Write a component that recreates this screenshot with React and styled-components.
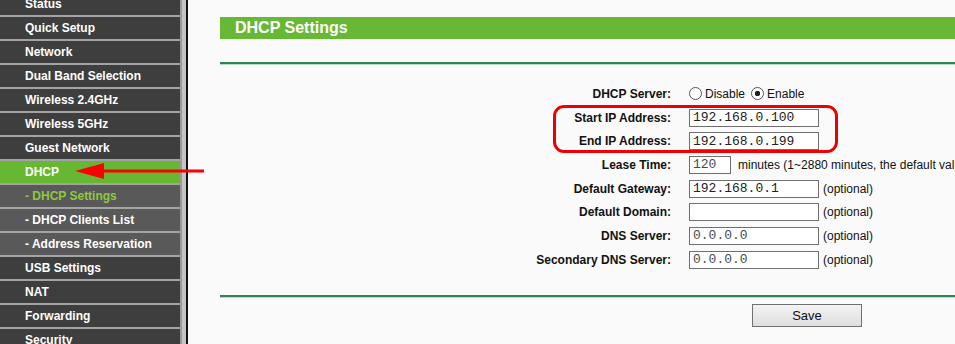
import styled, { createGlobalStyle } from 'styled-components';

const GlobalStyle = createGlobalStyle`
  html, body {
    margin: 0;
    padding: 0;
    overflow: hidden;
    background: #fafafa;
  }
  body {
    font-family: "Liberation Sans", Arial, sans-serif;
  }
`;

const menu = [
  { label: 'Status' },
  { label: 'Quick Setup' },
  { label: 'Network' },
  { label: 'Dual Band Selection' },
  { label: 'Wireless 2.4GHz' },
  { label: 'Wireless 5GHz' },
  { label: 'Guest Network' },
  { label: 'DHCP', active: true },
  { label: '- DHCP Settings', sub: true, current: true },
  { label: '- DHCP Clients List', sub: true },
  { label: '- Address Reservation', sub: true },
  { label: 'USB Settings' },
  { label: 'NAT' },
  { label: 'Forwarding' },
  { label: 'Security' },
];

const App = () => {
  return (
    <Page>
      <GlobalStyle />
      <Sidebar>
        {menu.map((item) => (
          <MenuItem
            key={item.label}
            $active={item.active}
            $sub={item.sub}
            $current={item.current}
          >
            {item.label}
          </MenuItem>
        ))}
      </Sidebar>
      <Divider />
      <Content>
        <TitleBar>DHCP Settings</TitleBar>
        <Rule />
        <Form>
          <Row>
            <Label>DHCP Server:</Label>
            <Value>
              <Radio />
              <span>Disable</span>
              <Radio $checked />
              <span>Enable</span>
            </Value>
          </Row>
          <Row>
            <Label>Start IP Address:</Label>
            <Value>
              <Field readOnly value="192.168.0.100" />
            </Value>
          </Row>
          <Row>
            <Label>End IP Address:</Label>
            <Value>
              <Field readOnly value="192.168.0.199" />
            </Value>
          </Row>
          <Row>
            <Label>Lease Time:</Label>
            <Value $gap={7}>
              <Field readOnly value="120" $width={42} $muted />
              <span>minutes (1~2880 minutes, the default value is 120)</span>
            </Value>
          </Row>
          <Row>
            <Label>Default Gateway:</Label>
            <Value>
              <Field readOnly value="192.168.0.1" />
              <span>(optional)</span>
            </Value>
          </Row>
          <Row>
            <Label>Default Domain:</Label>
            <Value>
              <Field readOnly value="" />
              <span>(optional)</span>
            </Value>
          </Row>
          <Row>
            <Label>DNS Server:</Label>
            <Value>
              <Field readOnly value="0.0.0.0" $muted />
              <span>(optional)</span>
            </Value>
          </Row>
          <Row>
            <Label>Secondary DNS Server:</Label>
            <Value>
              <Field readOnly value="0.0.0.0" $muted />
              <span>(optional)</span>
            </Value>
          </Row>
          <Highlight />
        </Form>
        <Rule $top={23} />
        <SaveButton>Save</SaveButton>
      </Content>
      <Arrow width="210" height="30" viewBox="0 0 210 30">
        <line x1="100" y1="15" x2="204" y2="15" stroke="#f00" strokeWidth="3" />
        <polygon points="75,15 104,7 104,23" fill="#f00" />
      </Arrow>
    </Page>
  );
};

const Page = styled.div`
  position: relative;
  display: flex;
  width: 955px;
  height: 344px;
  overflow: hidden;
  background: #fafafa;
`;

const Sidebar = styled.nav`
  flex: 0 0 180px;
  display: flex;
  flex-direction: column;
  margin-top: -7px;
`;

const MenuItem = styled.div`
  flex: 0 0 22px;
  line-height: 22px;
  padding-left: 25px;
  border-bottom: 2px solid #a3a3a3;
  font-size: 12px;
  font-weight: bold;
  white-space: nowrap;
  color: ${(p) => (p.$current ? '#8fc93f' : '#fff')};
  background: ${(p) => (p.$active ? '#66b833' : p.$sub ? '#595959' : '#3e3e3e')};
`;

const Divider = styled.div`
  flex: 0 0 6px;
  background: linear-gradient(to right, #9a9a9a 0 2px, #c4c4c4 2px);
  border-right: 2px solid #111;
`;

const Content = styled.main`
  flex: 1;
  min-width: 0;
  padding: 17px 0 0 32px;
  white-space: nowrap;
`;

const TitleBar = styled.h1`
  margin: 0;
  height: 22px;
  line-height: 22px;
  padding-left: 15px;
  background: #67b834;
  color: #fff;
  font-size: 16px;
  font-weight: bold;
`;

const Rule = styled.div`
  margin-top: ${(p) => p.$top ?? 23}px;
  height: 2px;
  background: #2c8552;
  box-shadow: 0 1px 0 #b8dcc5;
`;

const Form = styled.div`
  position: relative;
  margin-top: 18px;
  display: grid;
  grid-auto-rows: 23.7px;
`;

const Row = styled.div`
  display: grid;
  grid-template-columns: 451px auto;
  column-gap: 18px;
  align-items: center;
`;

const Label = styled.div`
  text-align: right;
  font-size: 12px;
  font-weight: bold;
  color: #111;
`;

const Value = styled.div`
  display: flex;
  align-items: center;
  gap: ${(p) => p.$gap ?? 4}px;
  font-size: 12px;
  color: #111;
`;

const Field = styled.input`
  box-sizing: border-box;
  width: ${(p) => p.$width ?? 130}px;
  height: 18px;
  margin: 0;
  padding: 0 0 0 3px;
  border: 1px solid #6f6f6f;
  background: #fff;
  font-family: "Liberation Mono", "Courier New", monospace;
  font-size: 13px;
  color: ${(p) => (p.$muted ? '#4a4a4a' : '#222')};
  outline: none;
`;

const Radio = styled.span`
  box-sizing: border-box;
  width: 13px;
  height: 13px;
  margin-right: -1px;
  border: 1px solid #555;
  border-radius: 50%;
  background: ${(p) =>
    p.$checked
      ? 'radial-gradient(circle, #222 0 2.5px, #fff 3px)'
      : '#fff'};
  & + span + & {
    margin-left: 2px;
  }
`;

const Highlight = styled.div`
  position: absolute;
  left: 333px;
  top: 23px;
  width: 285px;
  height: 48px;
  box-sizing: border-box;
  border: 3px solid #ee0000;
  border-radius: 11px;
  pointer-events: none;
`;

const SaveButton = styled.button`
  display: block;
  margin: 7px 0 0 532px;
  width: 110px;
  height: 23px;
  border: 1px solid #707070;
  background: linear-gradient(#f3f3f3, #dedede);
  font-family: "Liberation Sans", Arial, sans-serif;
  font-size: 13px;
  color: #111;
  padding: 0;
`;

const Arrow = styled.svg`
  position: absolute;
  left: 0;
  top: 156px;
`;

export default App;
